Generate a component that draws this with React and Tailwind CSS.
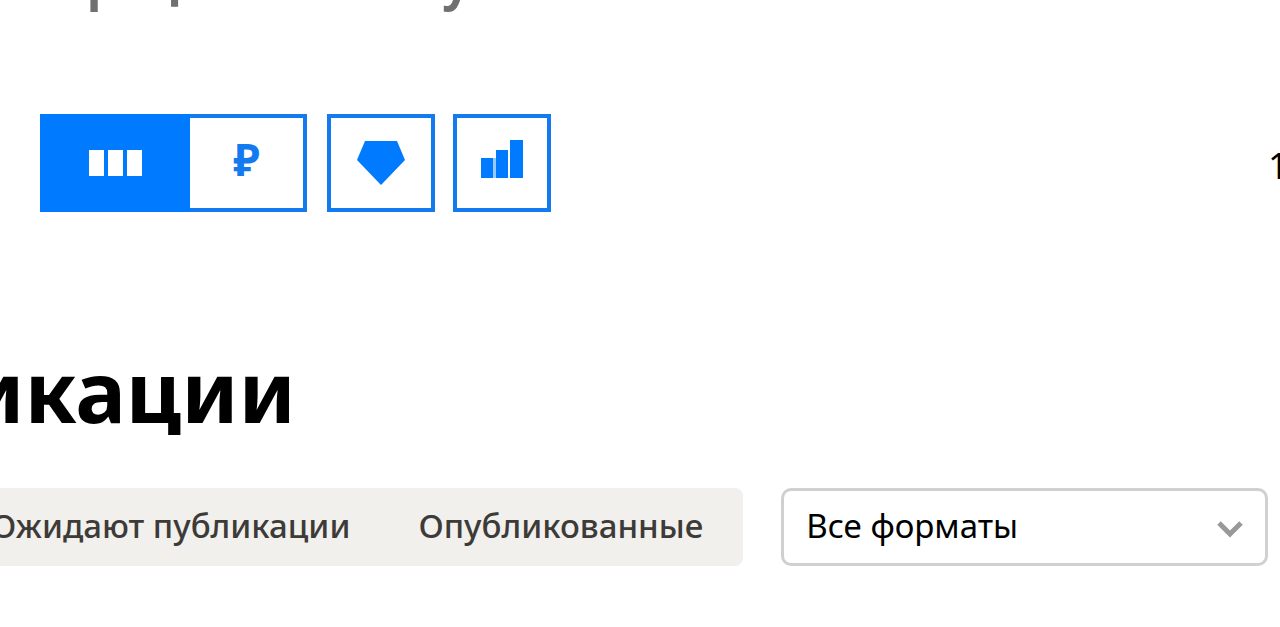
import React from "react";

const filters = ["Ожидают публикации", "Опубликованные"];
const formats = ["Все форматы", "Статьи", "Видео"];

const IconButton = ({ label, className, children }) => (
  <button
    type="button"
    aria-label={label}
    className={`flex items-center justify-center border-4 border-[#147af0] text-[#007aff] ${className}`}
  >
    {children}
  </button>
);

const Toolbar = () => (
  <div className="flex h-[98px] items-stretch">
    <button
      type="button"
      aria-label="Статистика"
      className="flex w-[150px] items-center justify-center bg-[#007aff] text-white"
    >
      <svg width="54" height="26" viewBox="0 0 54 26" fill="currentColor">
        <path d="M1 0h15v26H1zM20 0h15v26H20zM39 0h15v26H39z" />
      </svg>
    </button>
    <button
      type="button"
      className="flex w-[117px] items-center justify-center border-4 border-l-0 border-[#147af0] pb-2 text-[44px] leading-none font-bold text-[#147af0]"
    >
      ₽
    </button>
    <IconButton label="Премиум" className="ml-5 w-[108px]">
      <svg width="50" height="44" viewBox="0 0 50 44" fill="currentColor">
        <path d="M9 0h32l8 19-24 25L1 19z" />
      </svg>
    </IconButton>
    <IconButton label="Рейтинг" className="ml-[18px] w-[98px] pb-2">
      <svg width="42" height="38" viewBox="0 0 42 38" fill="currentColor">
        <path d="M0 18h12v20H0zM15 10h12v28H15zM29 0h13v38H29z" />
        <path d="M12 18h3v20h-3z" opacity=".4" />
      </svg>
    </IconButton>
    <div className="-mr-24 ml-auto flex w-[108px] items-center pt-1.5 text-[36px] whitespace-nowrap text-black">
      1 234
    </div>
  </div>
);

const Filters = () => (
  <div className="flex items-center gap-[38px] pr-3">
    <div className="-ml-[49px] flex h-[78px] shrink-0 items-center gap-[68px] rounded-lg bg-[#f2f0ed] pr-10">
      {filters.map((name) => (
        <button
          key={name}
          type="button"
          className="pb-1 text-[33px] leading-none font-medium whitespace-nowrap text-[#3d3b38]"
        >
          {name}
        </button>
      ))}
    </div>
    <div className="relative grow">
      <select
        aria-label="Формат"
        className="block h-[78px] w-full appearance-none rounded-[10px] border-3 border-[#d0d0d0] bg-white pr-16 pb-0.5 pl-[22px] text-[33px] text-black"
      >
        {formats.map((format) => (
          <option key={format}>{format}</option>
        ))}
      </select>
      <svg
        className="pointer-events-none absolute top-8 right-6"
        width="28"
        height="20"
        viewBox="0 0 28 20"
        fill="none"
        stroke="#999"
        strokeWidth="5"
      >
        <path d="M3 3l11 11L25 3" />
      </svg>
    </div>
  </div>
);

const App = () => {
  return (
    <main className="overflow-hidden bg-white pl-10 font-['Noto_Sans',sans-serif]">
      <p className="-mt-[53px] -ml-[52px] text-[49px] leading-[68px] font-bold whitespace-nowrap text-[#707070]">
        Операции по счёту
      </p>
      <div className="pt-[99px]">
        <Toolbar />
      </div>
      <h1 className="mt-[122px] -ml-[292px] text-[85px] leading-[112px] font-bold whitespace-nowrap text-black">
        Публикации
      </h1>
      <div className="mt-[42px]">
        <Filters />
      </div>
    </main>
  );
};

export default App;
